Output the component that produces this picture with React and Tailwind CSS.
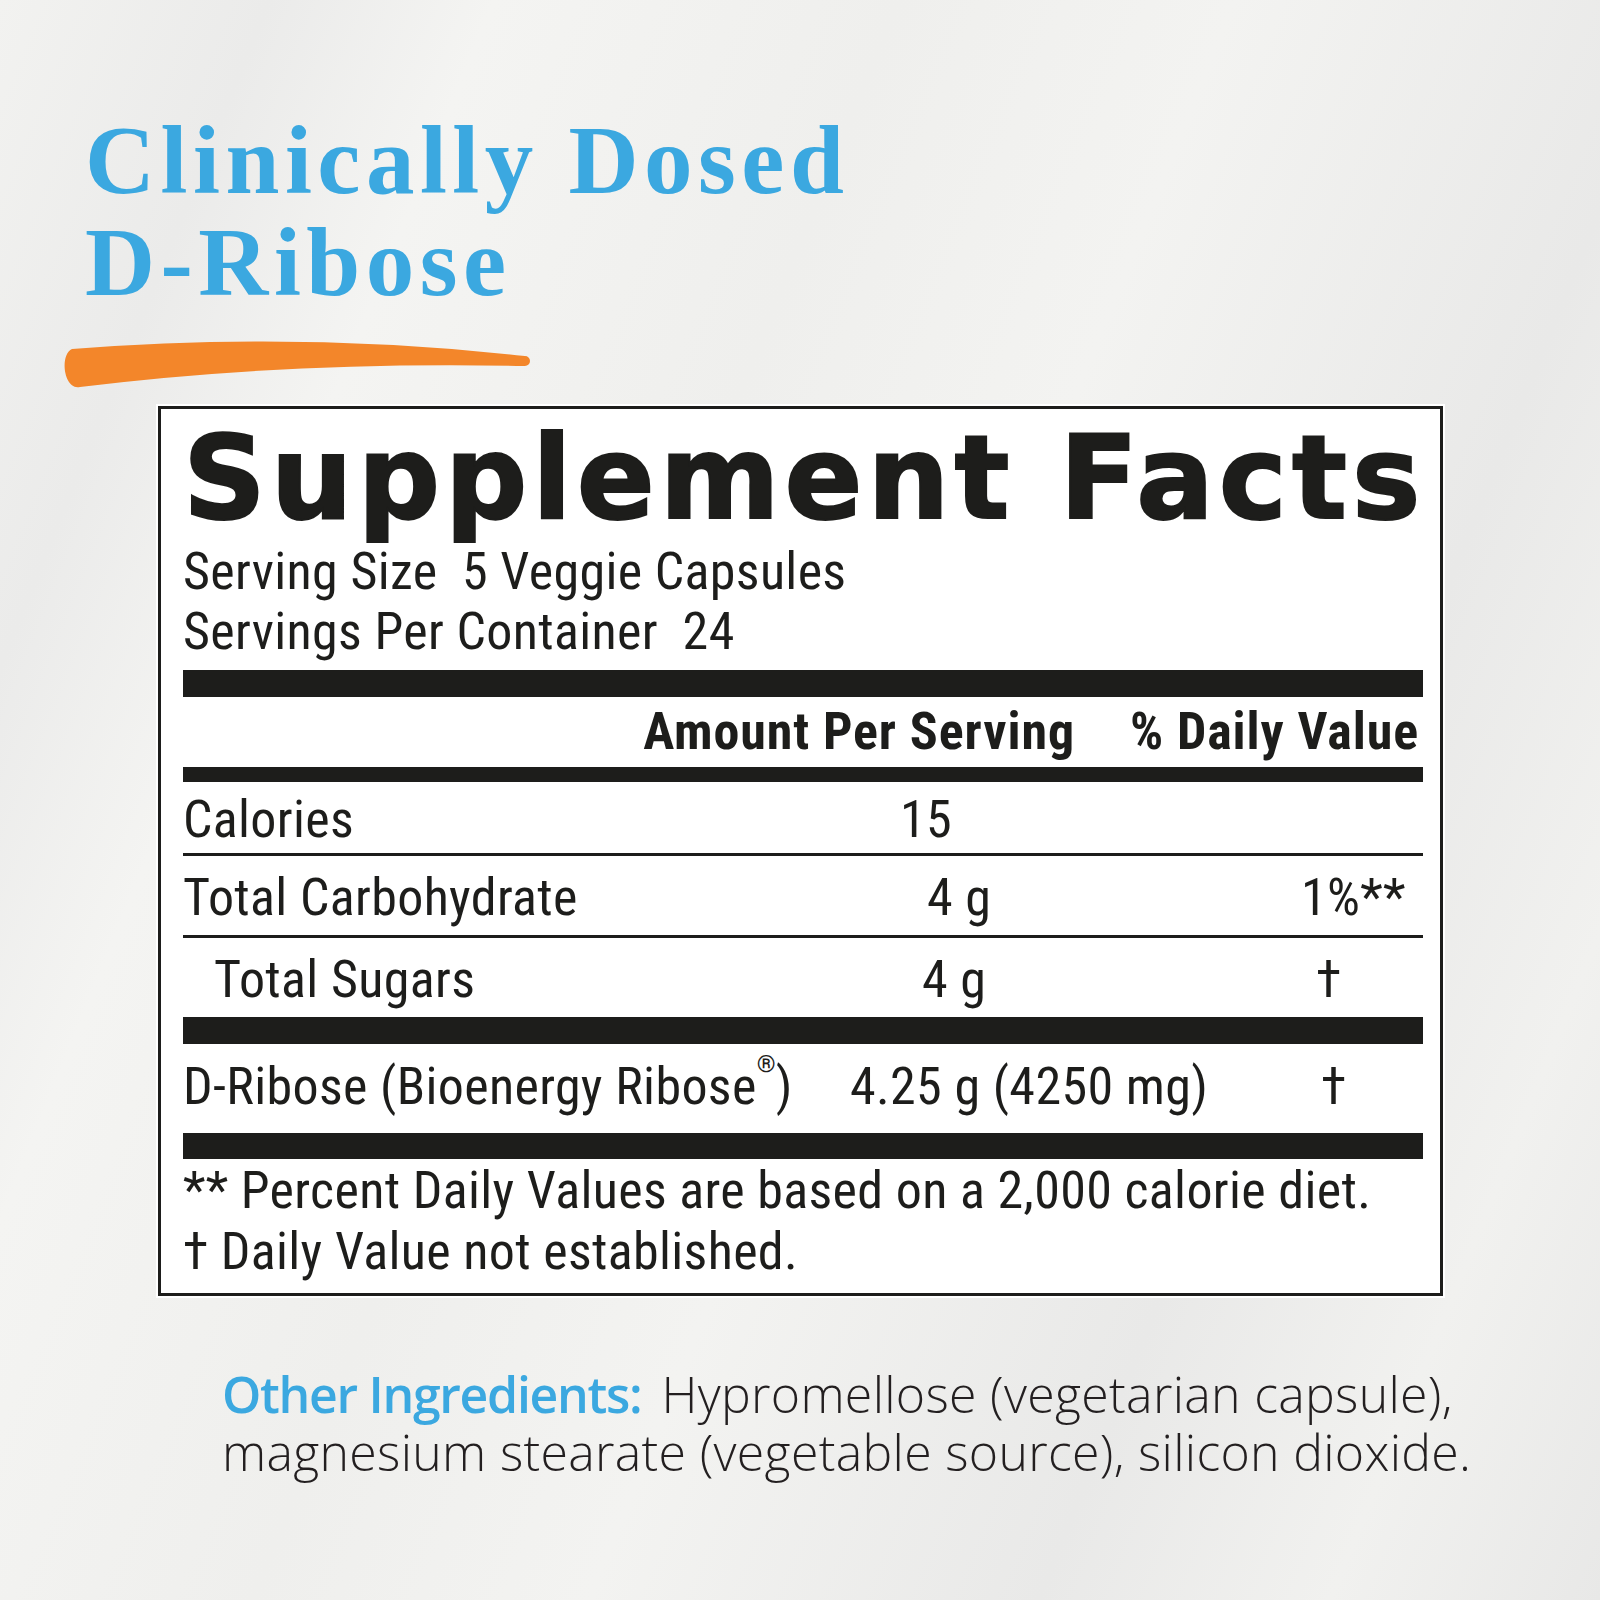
import React from "react";

const cond = "font-['Roboto_Condensed','Open_Sans',sans-serif] tracking-[0.35px]";

function Row({ h, lh, label, amount, amountPl, dv, dvPl, labelPl = 0 }) {
  return (
    <div className={`flex ${cond} text-[52px] text-[#1d1d1b]`} style={{ height: h, lineHeight: `${lh}px` }}>
      <div className="w-[666px] shrink-0 whitespace-nowrap" style={{ paddingLeft: labelPl }}>{label}</div>
      <div className="w-[441px] shrink-0 whitespace-nowrap" style={{ paddingLeft: amountPl }}>{amount}</div>
      <div className="flex-1 whitespace-nowrap" style={{ paddingLeft: dvPl }}>{dv}</div>
    </div>
  );
}

export default function App() {
  return (
    <div className="relative w-[1600px] h-[1600px] overflow-hidden bg-[#eeeeec] bg-[linear-gradient(112deg,#f2f2f0_0%,#ebebea_12%,#f4f4f2_22%,#efefed_40%,#f3f3f1_55%,#e9e9e8_75%,#f1f1ef_88%,#e8e8e7_100%)]">
      <div className="pl-[85px] pt-[110px]">
        <h1 className="font-['Liberation_Serif',serif] font-bold text-[97px] leading-[102px] tracking-[5.5px] text-[#3ba8e0]">
          Clinically Dosed
          <br />
          D-Ribose
        </h1>
      </div>
      <svg width="480" height="56" viewBox="0 0 480 56" className="ml-[60px] mt-[25px] block overflow-visible">
        <path
          d="M12 10 Q240 -8 465 17 A5 5 0 0 1 465 27 Q230 22 20 48 C4 52 -1 16 12 10 Z"
          fill="#f3862a"
        />
      </svg>
      <div className="ml-[158px] mt-[11px] w-[1285px] h-[890px] border-[3px] border-[#1d1d1b] bg-white pl-[22px] pr-[17px] shadow-[0_0_0_2px_#ffffff]">
        <div className="pt-[12px] font-['DejaVu_Sans',sans-serif] font-bold text-[115px] leading-[115px] tracking-[5px] text-[#1d1d1b] whitespace-nowrap [-webkit-text-stroke:2px_#1d1d1b]">
          Supplement Facts
        </div>
        <div className={`mt-[4px] pt-[2px] ${cond} text-[52px] leading-[60px] text-[#1d1d1b] whitespace-pre`}>
          <div>Serving Size  5 Veggie Capsules</div>
          <div>Servings Per Container  24</div>
        </div>
        <div className="mt-[8px] h-[27px] bg-[#1d1d1b]" />
        <div className="flex justify-end h-[70px] leading-[70px] font-['Roboto_Condensed','Open_Sans',sans-serif] tracking-[0.9px] font-bold text-[52px] text-[#1d1d1b] pr-[4px]">
          <span>Amount Per Serving</span>
          <span className="ml-[55px]">% Daily Value</span>
        </div>
        <div className="h-[15px] bg-[#1d1d1b]" />
        <Row h={71} lh={75} label="Calories" amount="15" amountPl={51} dv="" dvPl={0} />
        <div className="h-[3px] bg-[#1d1d1b]" />
        <Row h={79} lh={83} label="Total Carbohydrate" amount="4 g" amountPl={78} dv="1%**" dvPl={11} />
        <div className="h-[3px] bg-[#1d1d1b]" />
        <Row h={79} lh={84} label="Total Sugars" labelPl={31} amount="4 g" amountPl={73} dv="†" dvPl={26} />
        <div className="h-[27px] bg-[#1d1d1b]" />
        <Row
          h={89}
          lh={85}
          label={<>D-Ribose (Bioenergy Ribose<sup className="text-[24px] align-[20px]">®</sup>)</>}
          amount="4.25 g (4250 mg)"
          amountPl={1}
          dv="†"
          dvPl={31}
        />
        <div className="h-[26px] bg-[#1d1d1b]" />
        <div className={`mt-[1px] ${cond} text-[52px] leading-[61px] text-[#1d1d1b] whitespace-nowrap`}>
          <div>** Percent Daily Values are based on a 2,000 calorie diet.</div>
          <div>† Daily Value not established.</div>
        </div>
      </div>
      <div className="ml-[222px] mt-[69px] font-['Open_Sans','Lato',sans-serif] font-light text-[50px] leading-[58px] tracking-[0.3px] text-[#231f20] whitespace-nowrap">
        <div>
          <span className="font-semibold tracking-[-1.3px] text-[#3ba8e0]">Other Ingredients:</span>
          <span className="ml-[20px]">Hypromellose (vegetarian capsule),</span>
        </div>
        <div>magnesium stearate (vegetable source), silicon dioxide.</div>
      </div>
    </div>
  );
}
